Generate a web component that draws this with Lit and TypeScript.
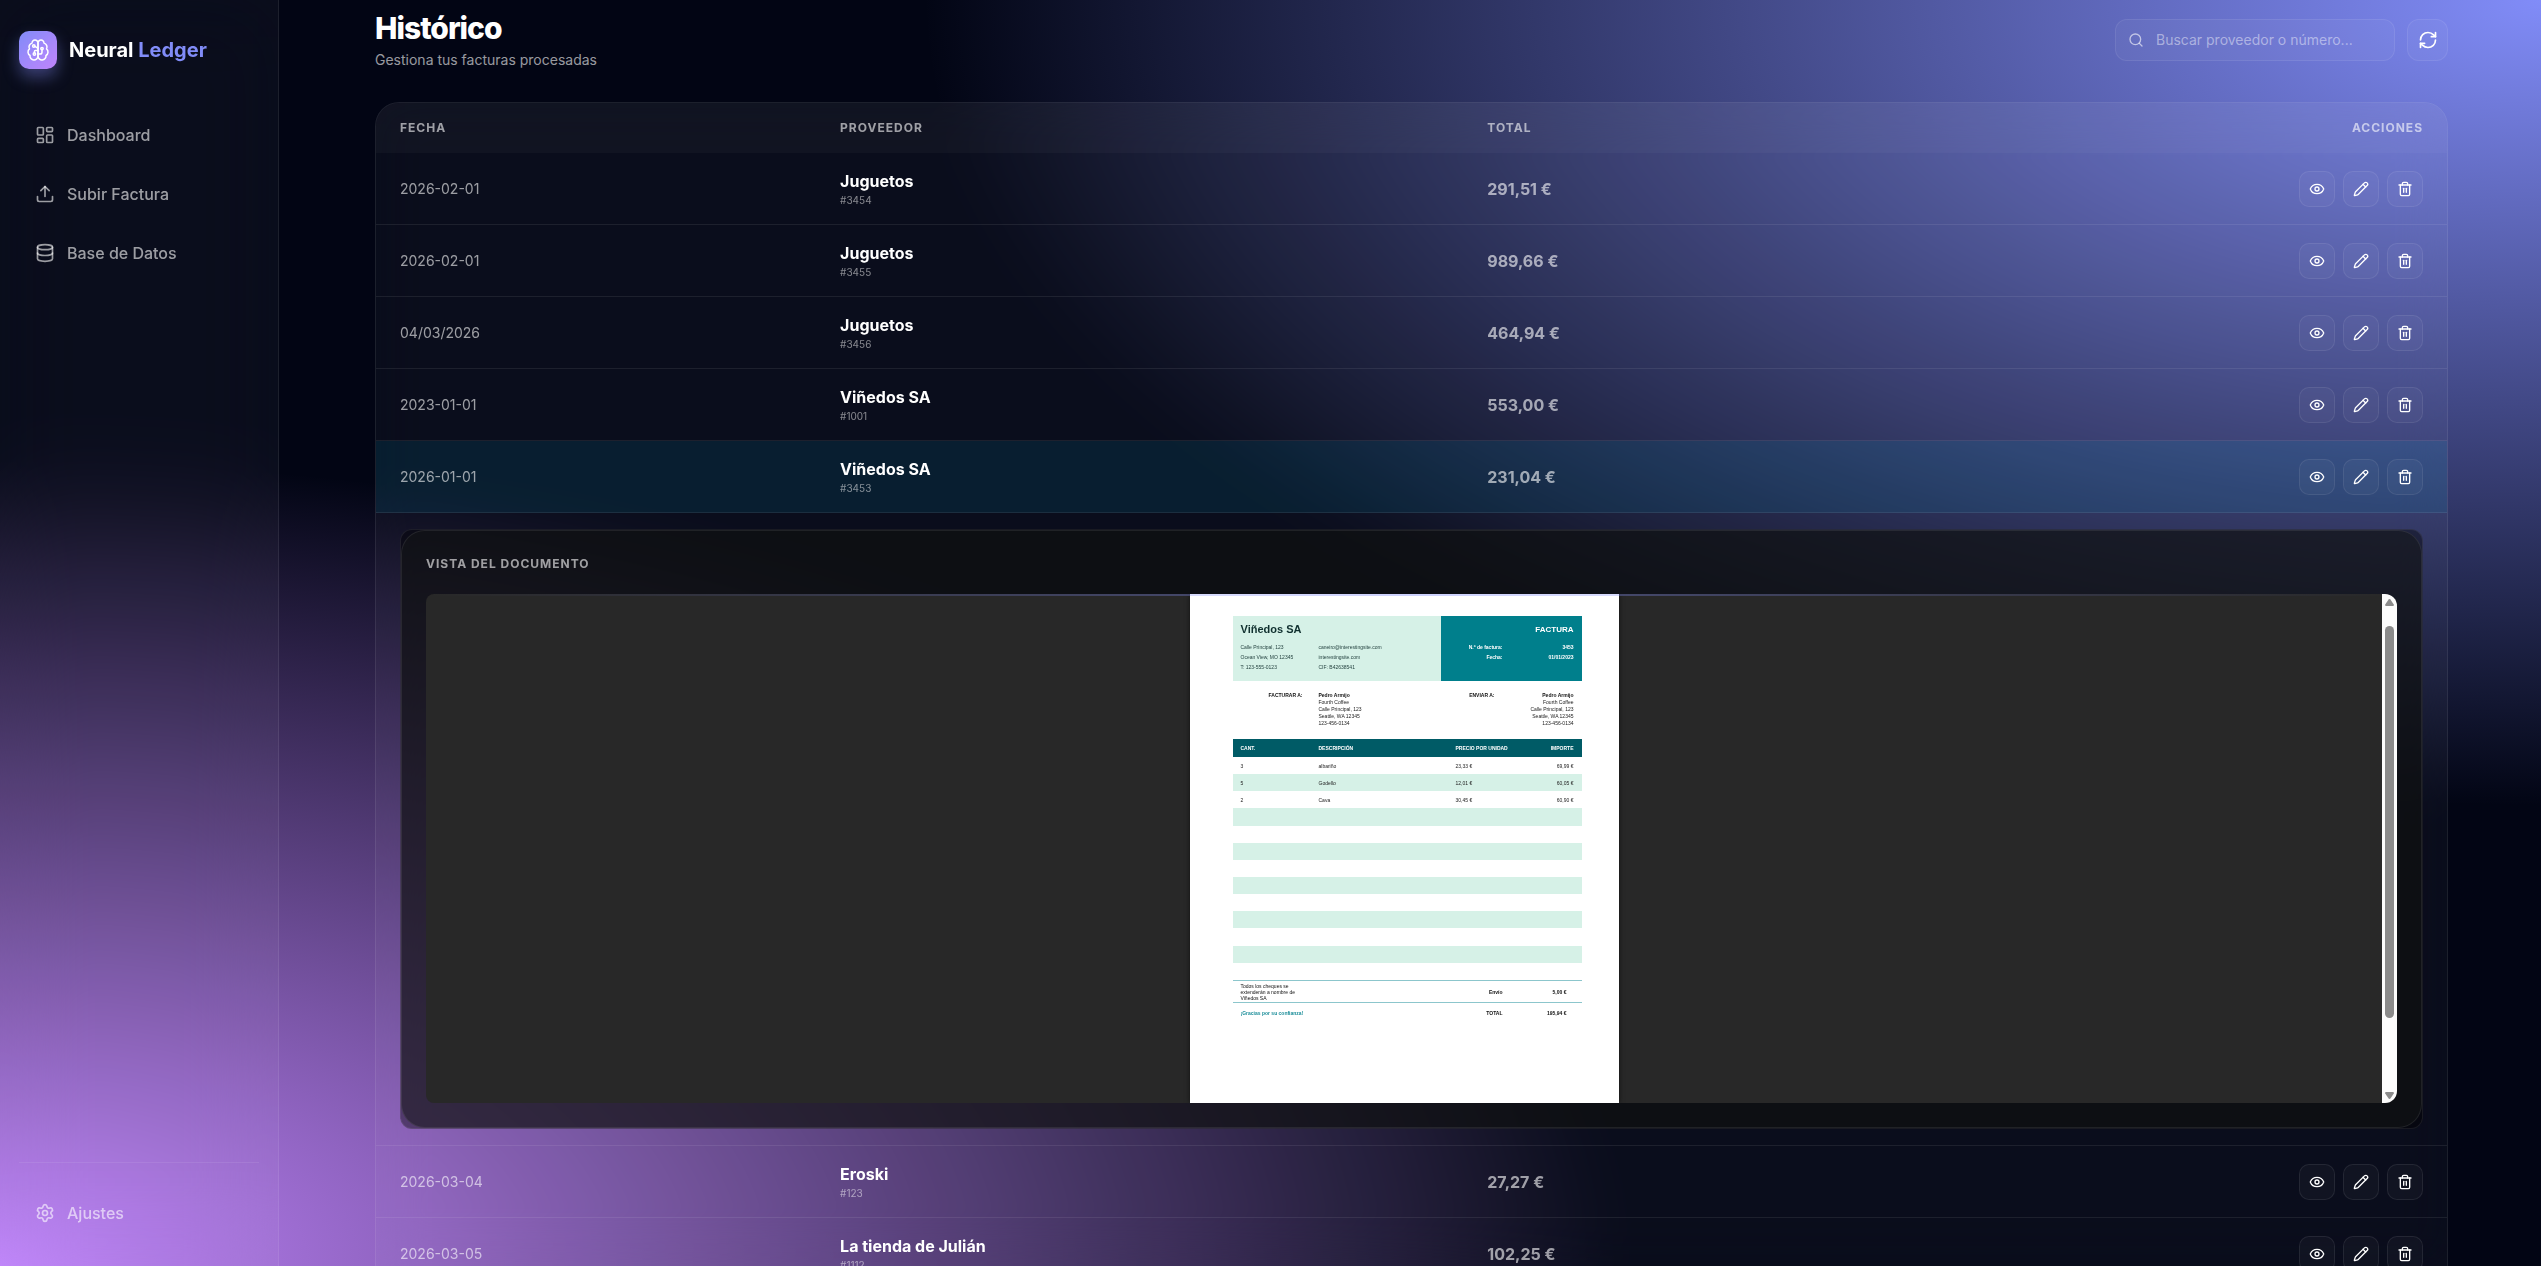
import { LitElement, html, css, svg, nothing } from "lit";
import { customElement, property, state } from "lit/decorators.js";

const ICONS = {
  dashboard: svg`<rect width="7" height="9" x="3" y="3" rx="1"/><rect width="7" height="5" x="14" y="3" rx="1"/><rect width="7" height="9" x="14" y="12" rx="1"/><rect width="7" height="5" x="3" y="16" rx="1"/>`,
  upload: svg`<path d="M12 3v12"/><path d="m17 8-5-5-5 5"/><path d="M21 15v4a2 2 0 0 1-2 2H5a2 2 0 0 1-2-2v-4"/>`,
  database: svg`<ellipse cx="12" cy="5" rx="9" ry="3"/><path d="M3 5v14a9 3 0 0 0 18 0V5"/><path d="M3 12a9 3 0 0 0 18 0"/>`,
  settings: svg`<path d="M9.671 4.136a2.34 2.34 0 0 1 4.659 0 2.34 2.34 0 0 0 3.319 1.915 2.34 2.34 0 0 1 2.33 4.033 2.34 2.34 0 0 0 0 3.831 2.34 2.34 0 0 1-2.33 4.033 2.34 2.34 0 0 0-3.319 1.915 2.34 2.34 0 0 1-4.659 0 2.34 2.34 0 0 0-3.32-1.915 2.34 2.34 0 0 1-2.33-4.033 2.34 2.34 0 0 0 0-3.831A2.34 2.34 0 0 1 6.35 6.051a2.34 2.34 0 0 0 3.319-1.915"/><circle cx="12" cy="12" r="3"/>`,
  brain: svg`<path d="M12 5a3 3 0 1 0-5.997.125 4 4 0 0 0-2.526 5.77 4 4 0 0 0 .556 6.588A4 4 0 1 0 12 18Z"/><path d="M12 5a3 3 0 1 1 5.997.125 4 4 0 0 1 2.526 5.77 4 4 0 0 1-.556 6.588A4 4 0 1 1 12 18Z"/><circle cx="7.8" cy="8" r="1.2"/><path d="M9 8.3 12 10.4"/><circle cx="8.4" cy="16" r="1.2"/><path d="M8.4 14.8v-1.3q0-1 1-1H12"/><circle cx="16" cy="10.6" r="1.2"/><path d="M16 11.8v2.4q0 1.8-1.8 1.8H12"/>`,
  search: svg`<circle cx="11" cy="11" r="8"/><path d="m21 21-4.3-4.3"/>`,
  refresh: svg`<path d="M3 12a9 9 0 0 1 9-9 9.75 9.75 0 0 1 6.74 2.74L21 8"/><path d="M21 3v5h-5"/><path d="M21 12a9 9 0 0 1-9 9 9.75 9.75 0 0 1-6.74-2.74L3 16"/><path d="M8 16H3v5"/>`,
  eye: svg`<path d="M2.062 12.348a1 1 0 0 1 0-.696 10.75 10.75 0 0 1 19.876 0 1 1 0 0 1 0 .696 10.75 10.75 0 0 1-19.876 0"/><circle cx="12" cy="12" r="3"/>`,
  pencil: svg`<path d="M21.174 6.812a1 1 0 0 0-3.986-3.987L3.842 16.174a2 2 0 0 0-.5.83l-1.321 4.352a.5.5 0 0 0 .623.622l4.353-1.32a2 2 0 0 0 .83-.497z"/><path d="m15 5 4 4"/>`,
  trash: svg`<path d="M3 6h18"/><path d="M19 6v14a2 2 0 0 1-2 2H7a2 2 0 0 1-2-2V6"/><path d="M8 6V4a2 2 0 0 1 2-2h4a2 2 0 0 1 2 2v2"/><path d="M10 11v6"/><path d="M14 11v6"/>`,
};

const icon = (name: keyof typeof ICONS, size: number, weight = 2) => html`
  <svg width=${size} height=${size} viewBox="0 0 24 24" fill="none" stroke="currentColor"
    stroke-width=${weight} stroke-linecap="round" stroke-linejoin="round" aria-hidden="true">${ICONS[name]}</svg>`;

interface Invoice {
  date: string;
  vendor: string;
  number: string;
  total: string;
}

const INVOICES: Invoice[] = [
  { date: "2026-02-01", vendor: "Juguetos", number: "3454", total: "291,51 €" },
  { date: "2026-02-01", vendor: "Juguetos", number: "3455", total: "989,66 €" },
  { date: "04/03/2026", vendor: "Juguetos", number: "3456", total: "464,94 €" },
  { date: "2023-01-01", vendor: "Viñedos SA", number: "1001", total: "553,00 €" },
  { date: "2026-01-01", vendor: "Viñedos SA", number: "3453", total: "231,04 €" },
  { date: "2026-03-04", vendor: "Eroski", number: "123", total: "27,27 €" },
  { date: "2026-03-05", vendor: "La tienda de Julián", number: "1112", total: "102,25 €" },
];

const LINES = [
  ["3", "albariño", "23,33 €", "69,99 €"],
  ["5", "Godello", "12,01 €", "60,05 €"],
  ["2", "Cava", "30,45 €", "60,90 €"],
  ...Array.from({ length: 10 }, () => ["", "", "", ""]),
];

@customElement("invoice-sheet")
export class InvoiceSheet extends LitElement {
  static styles = css`
    :host {
      display: block;
      box-sizing: border-box;
      width: 429px;
      padding: 22px 37px 0 43px;
      background: #fff;
      color: #222;
      box-shadow: 0 0 5px rgba(0, 0, 0, 0.6);
      font: 5px/10px "Liberation Sans", Arial, sans-serif;
    }
    p, h3, h4 { margin: 0; }
    .head { display: grid; grid-template-columns: 208px 1fr; height: 65px; }
    .from { background: #d6f1e7; padding: 6px 8px; color: #1f3d3b; }
    .from h3 { font-size: 11px; line-height: 15px; color: #10302f; margin-bottom: 5px; }
    .cols { display: grid; grid-template-columns: 78px 1fr; }
    .title { background: #007f8c; color: #fff; padding: 6px 8px; font-weight: 700; text-align: right; }
    .title h4 { font-size: 8px; line-height: 15px; margin-bottom: 5px; }
    .pairs { display: grid; grid-template-columns: 54px 1fr; }
    .parties {
      display: grid;
      grid-template-columns: 70px 124px 68px 1fr;
      padding: 11px 8px 12px 0;
      line-height: 7px;
    }
    .parties b { color: #111; }
    .right { text-align: right; }
    .party { padding-left: 16px; }
    table { width: 100%; height: 241px; border-collapse: collapse; table-layout: fixed; }
    th, td { height: 17px; padding: 0 8px; text-align: left; line-height: 10px; white-space: nowrap; }
    th { background: #005b66; color: #fff; height: 18px; }
    tr:nth-child(even) td { background: #d6f1e7; }
    .qty { width: 62px; }
    .desc { width: 121px; }
    .price { width: 67px; }
    th.right, td.right { text-align: right; }
    .foot {
      display: grid;
      grid-template-columns: 60px 1fr 64px;
      align-items: center;
      padding: 0 15px 0 8px;
      font-weight: 700;
      color: #111;
    }
    .shipping {
      border-top: 1px solid #8cc6cc;
      border-bottom: 1px solid #8cc6cc;
      height: 21px;
      line-height: 6px;
    }
    .shipping p { font-weight: 400; }
    .grand { height: 20px; }
    .foot > :nth-child(2) { text-align: right; }
    .thanks { color: #1a8d99; white-space: nowrap; }
  `;

  render() {
    return html`
      <div class="head">
        <div class="from">
          <h3>Viñedos SA</h3>
          <div class="cols">
            <span>Calle Principal, 123</span><span>caneiro@interestingsite.com</span>
            <span>Ocean View, MO 12345</span><span>interestingsite.com</span>
            <span>T: 123-555-0123</span><span>CIF: B42638541</span>
          </div>
        </div>
        <div class="title">
          <h4>FACTURA</h4>
          <div class="pairs">
            <span>N.º de factura:</span><span>3453</span>
            <span>Fecha:</span><span>01/01/2023</span>
          </div>
        </div>
      </div>
      <div class="parties">
        <b class="right">FACTURAR A:</b>
        <div class="party"><b>Pedro Armijo</b><br>Fourth Coffee<br>Calle Principal, 123<br>Seattle, WA 12345<br>123-456-0134</div>
        <b class="right">ENVIAR A:</b>
        <div class="right"><b>Pedro Armijo</b><br>Fourth Coffee<br>Calle Principal, 123<br>Seattle, WA 12345<br>123-456-0134</div>
      </div>
      <table>
        <thead>
          <tr><th class="qty">CANT.</th><th class="desc">DESCRIPCIÓN</th><th class="price">PRECIO POR UNIDAD</th><th class="right">IMPORTE</th></tr>
        </thead>
        <tbody>
          ${LINES.map(([q, d, p, a]) => html`<tr><td>${q}</td><td>${d}</td><td>${p}</td><td class="right">${a}</td></tr>`)}
        </tbody>
      </table>
      <div class="foot shipping">
        <p>Todos los cheques se extenderán a nombre de Viñedos SA</p><span>Envío</span><span class="right">5,00 €</span>
      </div>
      <div class="foot grand">
        <span class="thanks">¡Gracias por su confianza!</span><span>TOTAL</span><span class="right">195,94 €</span>
      </div>
    `;
  }
}

@customElement("document-viewer")
export class DocumentViewer extends LitElement {
  static styles = css`
    :host {
      display: block;
      box-sizing: border-box;
      height: 600px;
      border: 1px solid rgba(255, 255, 255, 0.08);
      border-radius: 12px;
      background: rgba(0, 0, 0, 0.4);
      overflow: hidden;
    }
    .card {
      box-sizing: border-box;
      height: 100%;
      display: flex;
      flex-direction: column;
      padding: 24px;
      border: 1px solid rgba(255, 255, 255, 0.08);
      border-radius: 24px;
      background: rgba(22, 23, 24, 0.5);
    }
    h2 {
      margin: 0 0 22px;
      font-size: 12px;
      line-height: 17px;
      font-weight: 700;
      letter-spacing: 1px;
      color: rgba(255, 255, 255, 0.6);
    }
    .frame {
      position: relative;
      flex: 1;
      min-height: 0;
      display: grid;
      grid-template-columns: 1fr 15px;
      border-radius: 8px 12px 12px 8px;
      overflow: hidden;
      background: #282828;
    }
    .frame::before {
      content: "";
      position: absolute;
      inset: 0 0 auto;
      height: 2px;
      background: linear-gradient(90deg, transparent, #818cf8, transparent);
      opacity: 0.4;
    }
    .stage { display: flex; justify-content: center; }
    .bar {
      background: #fcfcfc;
      display: flex;
      flex-direction: column;
      align-items: center;
      padding: 5px 0 4px;
      color: #8b8b8b;
    }
    .bar svg { flex: none; fill: currentColor; }
    .track { flex: 1; padding: 20px 0 74px; display: flex; }
    .thumb { width: 9px; border-radius: 5px; background: currentColor; }
  `;

  render() {
    return html`
      <div class="card">
        <h2>VISTA DEL DOCUMENTO</h2>
        <div class="frame">
          <div class="stage"><invoice-sheet></invoice-sheet></div>
          <div class="bar">
            <svg width="9" height="7" viewBox="0 0 9 7"><path d="M3.6.5a1.2 1.2 0 0 1 1.8 0L8.8 5.4Q9.2 7 8 7H1Q-.2 7 .2 5.4Z"/></svg>
            <div class="track"><div class="thumb"></div></div>
            <svg width="9" height="7" viewBox="0 0 9 7"><path d="M3.6 6.5a1.2 1.2 0 0 0 1.8 0L8.8 1.6Q9.2 0 8 0H1Q-.2 0 .2 1.6Z"/></svg>
          </div>
        </div>
      </div>
    `;
  }
}

@customElement("app-sidebar")
export class AppSidebar extends LitElement {
  static styles = css`
    :host {
      box-sizing: border-box;
      width: 279px;
      flex: none;
      display: flex;
      flex-direction: column;
      padding: 31px 19px 28px;
      background: rgba(255, 255, 255, 0.035);
      backdrop-filter: blur(40px);
      border-right: 1px solid rgba(255, 255, 255, 0.08);
    }
    .brand { display: flex; align-items: center; gap: 12px; margin-bottom: 40px; font-size: 20px; line-height: 24px; font-weight: 700; color: #fff; }
    .logo {
      width: 38px;
      height: 38px;
      display: grid;
      place-items: center;
      border-radius: 10px;
      background: linear-gradient(135deg, #818cf8, #c084fc);
      box-shadow: 0 8px 16px rgba(129, 140, 248, 0.4);
    }
    .accent { color: #818cf8; }
    nav { display: flex; flex-direction: column; gap: 8px; }
    a {
      display: flex;
      align-items: center;
      gap: 12px;
      height: 51px;
      padding: 0 16px;
      font-size: 16px;
      line-height: 24px;
      font-weight: 500;
      color: rgba(255, 255, 255, 0.6);
      text-decoration: none;
    }
    .bottom { margin-top: auto; padding-top: 24px; border-top: 1px solid rgba(255, 255, 255, 0.08); }
  `;

  render() {
    return html`
      <div class="brand">
        <span class="logo">${icon("brain", 24, 1.5)}</span>
        <span>Neural <span class="accent">Ledger</span></span>
      </div>
      <nav>
        <a href="#dashboard">${icon("dashboard", 20)}Dashboard</a>
        <a href="#subir">${icon("upload", 20)}Subir Factura</a>
        <a href="#datos">${icon("database", 20)}Base de Datos</a>
      </nav>
      <div class="bottom"><a href="#ajustes">${icon("settings", 20)}Ajustes</a></div>
    `;
  }
}

@customElement("invoice-table")
export class InvoiceTable extends LitElement {
  @property({ type: Array }) invoices: Invoice[] = [];
  @state() private open = "3453";

  static styles = css`
    :host {
      display: block;
      border: 1px solid rgba(255, 255, 255, 0.08);
      border-radius: 24px;
      background: rgba(255, 255, 255, 0.035);
      backdrop-filter: blur(24px);
      overflow: hidden;
    }
    table { width: 100%; border-collapse: separate; border-spacing: 0; table-layout: fixed; }
    th {
      box-sizing: border-box;
      height: 50px;
      padding: 0 24px;
      text-align: left;
      font-size: 12px;
      line-height: 16px;
      font-weight: 700;
      letter-spacing: 1px;
      color: rgba(255, 255, 255, 0.6);
      background: rgba(255, 255, 255, 0.03);
    }
    .c-date { width: 21.25%; }
    .c-vendor { width: 31.25%; }
    .c-actions { text-align: right; }
    td {
      box-sizing: border-box;
      height: 72px;
      padding: 0 24px;
      border-bottom: 1px solid rgba(255, 255, 255, 0.08);
    }
    .open td { background: rgba(0, 160, 200, 0.12); }
    .date { font-size: 14px; color: rgba(255, 255, 255, 0.6); }
    .vendor { display: block; font-size: 16px; line-height: 22px; font-weight: 700; color: #fff; }
    .number { display: block; font-size: 10px; line-height: 16px; color: rgba(255, 255, 255, 0.5); }
    .total { font-size: 16px; font-weight: 700; color: rgba(255, 255, 255, 0.6); }
    .actions { display: flex; justify-content: flex-end; gap: 8px; }
    button {
      width: 36px;
      height: 36px;
      padding: 0;
      display: grid;
      place-items: center;
      border: 1px solid rgba(255, 255, 255, 0.08);
      border-radius: 10px;
      background: rgba(255, 255, 255, 0.03);
      color: #fff;
    }
    .detail td { padding: 16px 24px; }
  `;

  private toggle(n: string) {
    this.open = this.open === n ? "" : n;
  }

  render() {
    return html`
      <table>
        <thead>
          <tr>
            <th class="c-date">FECHA</th><th class="c-vendor">PROVEEDOR</th><th>TOTAL</th><th class="c-actions">ACCIONES</th>
          </tr>
        </thead>
        <tbody>
          ${this.invoices.map((i) => html`
            <tr class=${i.number === this.open ? "open" : ""}>
              <td class="date">${i.date}</td>
              <td><span class="vendor">${i.vendor}</span><span class="number">#${i.number}</span></td>
              <td class="total">${i.total}</td>
              <td>
                <div class="actions">
                  <button aria-label="Ver" @click=${() => this.toggle(i.number)}>${icon("eye", 16)}</button>
                  <button aria-label="Editar">${icon("pencil", 16)}</button>
                  <button aria-label="Eliminar">${icon("trash", 16)}</button>
                </div>
              </td>
            </tr>
            ${i.number === this.open
              ? html`<tr class="detail"><td colspan="4"><document-viewer></document-viewer></td></tr>`
              : nothing}
          `)}
        </tbody>
      </table>
    `;
  }
}

@customElement("app-root")
export class AppRoot extends LitElement {
  static styles = css`
    :host {
      display: flex;
      height: 100vh;
      overflow: hidden;
      font-family: Inter, "Liberation Sans", sans-serif;
      color: #fff;
      background:
        radial-gradient(ellipse at 100% 0%, #818cf8, transparent 45%),
        radial-gradient(ellipse at 0% 100%, #c084fc, transparent 45%),
        #020514;
    }
    main { flex: 1; min-width: 0; padding: 10px 93px 0 96px; overflow: hidden; }
    header { display: flex; justify-content: space-between; align-items: flex-start; height: 92px; }
    h1 { margin: 0; font-size: 30px; line-height: 36px; font-weight: 800; letter-spacing: -1px; }
    p { margin: 4px 0 0; font-size: 14px; line-height: 20px; color: rgba(255, 255, 255, 0.6); }
    .tools { display: flex; gap: 12px; padding-top: 9px; }
    .search, button {
      box-sizing: border-box;
      height: 42px;
      border: 1px solid rgba(255, 255, 255, 0.08);
      border-radius: 12px;
      background: rgba(255, 255, 255, 0.035);
    }
    .search { display: flex; align-items: center; gap: 12px; width: 280px; padding: 0 12px; color: rgba(255, 255, 255, 0.6); }
    .search svg { flex: none; }
    input { flex: 1; min-width: 0; padding: 0; border: 0; outline: 0; background: none; color: #fff; font: 14px/20px Inter, sans-serif; }
    input::placeholder { color: rgba(255, 255, 255, 0.45); opacity: 1; }
    button { width: 41px; padding: 0; display: grid; place-items: center; color: #fff; }
  `;

  render() {
    return html`
      <app-sidebar></app-sidebar>
      <main>
        <header>
          <div>
            <h1>Histórico</h1>
            <p>Gestiona tus facturas procesadas</p>
          </div>
          <div class="tools">
            <label class="search">${icon("search", 16)}<input type="text" aria-label="Buscar" placeholder="Buscar proveedor o número..."></label>
            <button aria-label="Actualizar">${icon("refresh", 20)}</button>
          </div>
        </header>
        <invoice-table .invoices=${INVOICES}></invoice-table>
      </main>
    `;
  }
}
